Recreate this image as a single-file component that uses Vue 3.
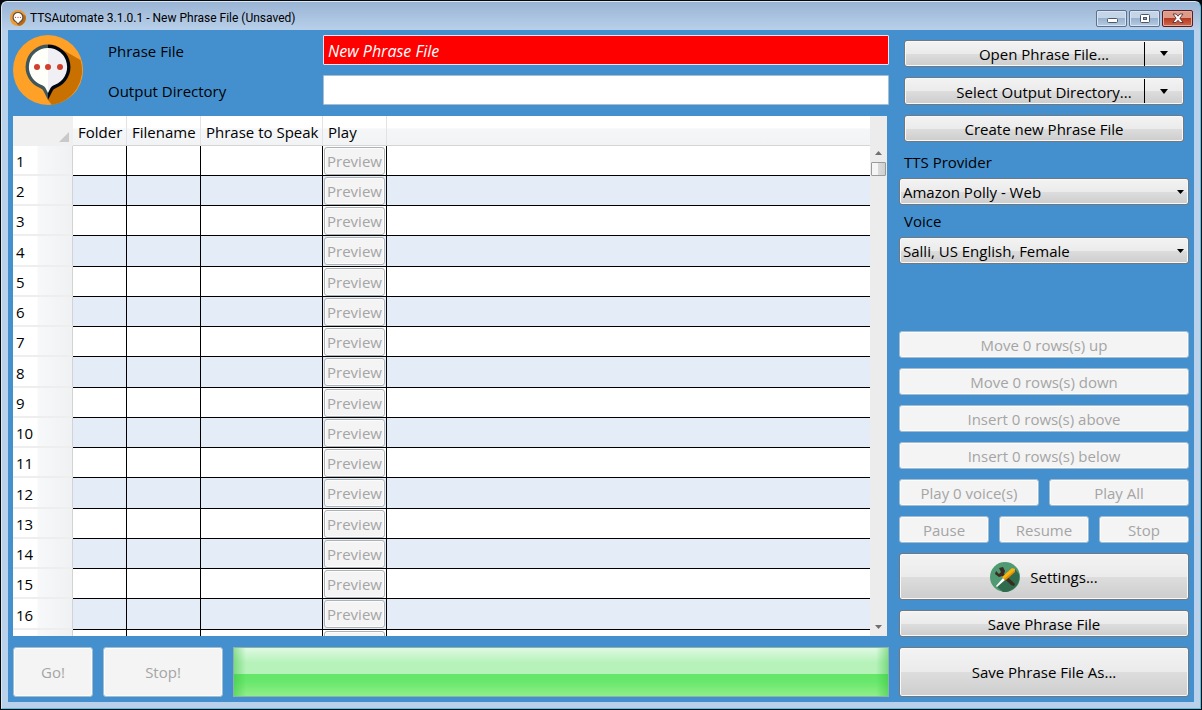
<script setup>
import { ref } from 'vue'

const phraseFile = ref('New Phrase File')
const outputDir = ref('')
const provider = ref('Amazon Polly - Web')
const voice = ref('Salli, US English, Female')
const rows = 17
const rowActions = [
  'Move 0 rows(s) up',
  'Move 0 rows(s) down',
  'Insert 0 rows(s) above',
  'Insert 0 rows(s) below',
]
</script>

<template>
  <div class="desktop">
    <div class="window">
      <header class="titlebar">
        <svg class="app-icon" viewBox="0 0 70 70" aria-hidden="true">
          <circle cx="35" cy="35" r="35" fill="#f09a30" />
          <path d="M52 16 L67.500 25 A35 35 0 0 1 39 70 L35 65Z" fill="#b86a10" />
          <path d="M35 9a23 23 0 0 0-10 44l10 13 10-13a23 23 0 0 0-10-44z" fill="#5a5048" />
          <path d="M35 13a19 19 0 0 0-8 36l8 9 8-9a19 19 0 0 0-8-36z" fill="#fff" />
          <g fill="#d0402c"><circle cx="24" cy="32" r="3" /><circle cx="35" cy="32" r="3" /><circle cx="46" cy="32" r="3" /></g>
        </svg>
        <span class="title">TTSAutomate 3.1.0.1 - New Phrase File (Unsaved)</span>
        <button class="cap" aria-label="Minimize">
          <svg width="12" height="12" viewBox="0 0 12 12"><rect x="1.5" y="6.5" width="10" height="4" rx="1" fill="#fff" stroke="#4c586a" /></svg>
        </button>
        <button class="cap" aria-label="Maximize">
          <svg width="12" height="12" viewBox="0 0 12 12"><rect x="1.5" y="2.5" width="9" height="8" rx="1" fill="#fff" stroke="#4c586a" /><rect x="4.5" y="5.5" width="3" height="2" fill="#8ea9c8" stroke="#4c586a" /></svg>
        </button>
        <button class="cap close" aria-label="Close">
          <svg width="12" height="12" viewBox="0 0 12 12"><path d="M1 2h3.200L6 4.200l1.800-2.200H11L7.900 6.200l3.300 4.300H8L6 8.300 4 10.500H.8l3.300-4.300z" fill="#fff" stroke="#5a3038" stroke-width=".9" /></svg>
        </button>
      </header>

      <main class="client">
        <section class="left">
          <div class="top">
            <svg class="logo" viewBox="0 0 70 70" aria-hidden="true">
              <circle cx="35" cy="35" r="35" fill="#ffa126" />
              <path d="M50 15 L67.500 25 A35 35 0 0 1 39 70 L35 65Z" fill="#c87000" />
              <path d="M35 9.500A22.500 22.500 0 0 0 27 53q3 1 4 4l4 8z" fill="#3f565c" />
              <path d="M35 9.500A22.500 22.500 0 0 1 43 53q-3 1-4 4l-4 8z" fill="#02060e" />
              <path d="M35 13A19 19 0 0 0 28 49.700q4 1.300 5 4.300l2 4z" fill="#fffffa" />
              <path d="M35 13A19 19 0 0 1 42 49.700q-4 1.300-5 4.300l-2 4z" fill="#f0f0f4" />
              <g fill="#d0402c"><circle cx="24" cy="32" r="3" /><circle cx="35" cy="32" r="3" /><circle cx="47" cy="32" r="3" /></g>
            </svg>
            <div class="fields">
              <label for="pf">Phrase File</label>
              <input id="pf" v-model="phraseFile" class="invalid" type="text" />
              <label for="od">Output Directory</label>
              <input id="od" v-model="outputDir" type="text" />
            </div>
          </div>

          <div class="grid">
            <div class="grid-view">
              <table>
                <colgroup>
                  <col class="c-num" /><col class="c-folder" /><col class="c-file" /><col class="c-phrase" /><col class="c-play" /><col />
                </colgroup>
                <thead>
                  <tr>
                    <th class="corner"><svg width="10" height="10" viewBox="0 0 10 10"><path d="M10 0v10H0z" fill="#c9c9c9" /></svg></th>
                    <th>Folder</th><th>Filename</th><th>Phrase to Speak</th><th>Play</th><th></th>
                  </tr>
                </thead>
                <tbody>
                  <tr v-for="n in rows" :key="n">
                    <th scope="row">{{ n }}</th>
                    <td></td><td></td><td></td>
                    <td class="play"><button class="preview" disabled>Preview</button></td>
                    <td></td>
                  </tr>
                </tbody>
              </table>
            </div>
            <div class="scroll">
              <svg width="7" height="4" viewBox="0 0 7 4"><path d="M3.500 0L7 4H0z" fill="#707070" /></svg>
              <div class="thumb"></div>
              <svg class="down" width="7" height="4" viewBox="0 0 7 4"><path d="M3.500 4L7 0H0z" fill="#707070" /></svg>
            </div>
          </div>

          <div class="run">
            <button class="btn go" disabled>Go!</button>
            <button class="btn halt" disabled>Stop!</button>
            <progress value="100" max="100" aria-label="Progress"></progress>
          </div>
        </section>

        <aside class="right">
          <div class="files">
            <div class="split">
              <button class="main">Open Phrase File...</button>
              <button class="drop" aria-label="Recent phrase files"><svg width="8" height="5" viewBox="0 0 8 5"><path d="M0 0h8L4 5z" /></svg></button>
            </div>
            <div class="split">
              <button class="main">Select Output Directory...</button>
              <button class="drop" aria-label="Recent directories"><svg width="8" height="5" viewBox="0 0 8 5"><path d="M0 0h8L4 5z" /></svg></button>
            </div>
            <button class="btn">Create new Phrase File</button>
          </div>
          <label class="lbl" for="prov">TTS Provider</label>
          <div class="combo">
            <select id="prov" v-model="provider"><option>Amazon Polly - Web</option></select>
            <svg width="7" height="4" viewBox="0 0 7 4"><path d="M0 0h7L3.500 4z" /></svg>
          </div>
          <label class="lbl" for="voice">Voice</label>
          <div class="combo">
            <select id="voice" v-model="voice"><option>Salli, US English, Female</option></select>
            <svg width="7" height="4" viewBox="0 0 7 4"><path d="M0 0h7L3.500 4z" /></svg>
          </div>

          <div class="actions">
            <button v-for="a in rowActions" :key="a" class="btn" disabled>{{ a }}</button>
            <div class="pair">
              <button class="btn" disabled>Play 0 voice(s)</button>
              <button class="btn" disabled>Play All</button>
            </div>
            <div class="pair">
              <button class="btn" disabled>Pause</button>
              <button class="btn" disabled>Resume</button>
              <button class="btn" disabled>Stop</button>
            </div>
            <button class="btn settings">
              <svg width="30" height="30" viewBox="0 0 30 30" aria-hidden="true">
                <circle cx="15" cy="15" r="15" fill="#4f9a72" />
                <path d="M7 25L25 7l4 5a15 15 0 0 1-16 18z" fill="#2f6b4c" />
                <path d="M9 6l4-1 2 4-1 3 9 8 2 2-1 2-3-1-9-9-3 1-4-3 1-3 3 3 2-2z" fill="#3b2a20" />
                <path d="M6 24l7-8 2 2-8 7z" fill="#fff" />
                <path d="M12 15L22 6l3 1 0 2-10 9z" fill="#f9b410" />
                <path d="M14 17l11-9v2l-9 8z" fill="#e08d08" />
              </svg>
              Settings...
            </button>
            <button class="btn">Save Phrase File</button>
            <button class="btn tall">Save Phrase File As...</button>
          </div>
        </aside>
      </main>
    </div>
  </div>
</template>

<style>
body {
  margin: 0;
}
</style>

<style scoped>
* {
  box-sizing: border-box;
}
.desktop {
  height: 100vh;
  min-height: 600px;
  padding: 1px;
  background: #05080c;
  font-family: "Open Sans", "Noto Sans", sans-serif;
  font-size: 15px;
  color: #000;
}
button,
input,
select {
  font: inherit;
  color: inherit;
  margin: 0;
}
.window {
  height: 100%;
  display: flex;
  flex-direction: column;
  padding: 0 6px 6px;
  background: linear-gradient(#9ab4d4, #b9d1ea 29px, #b9d1ea);
  border: 1px solid #dbe8f4;
  border-right-color: #45c6e8;
  border-bottom-color: #45c6e8;
  border-radius: 6px 6px 0 0;
}
.titlebar {
  height: 28px;
  flex: none;
  display: flex;
  align-items: center;
  gap: 2px;
  padding: 6px 1px 2px 2px;
  font-family: Roboto, "Open Sans", sans-serif;
  font-size: 12px;
}
.app-icon {
  width: 16px;
  height: 16px;
}
.title {
  flex: 1;
  padding-left: 2px;
}
.cap {
  width: 31px;
  height: 17px;
  padding: 0;
  display: flex;
  align-items: center;
  justify-content: center;
  border: 1px solid #5c708c;
  border-radius: 2px;
  background: linear-gradient(#c4d5e8 45%, #98b2ce 50%, #b4cce4);
  box-shadow: inset 0 0 0 1px #d9e5f2;
}
.close {
  border-color: #591c20;
  background: linear-gradient(#dd9a88 45%, #b63a22 50%, #cf6a4c);
  box-shadow: inset 0 0 0 1px #e4aa9e;
}
.client {
  flex: 1;
  min-height: 0;
  display: flex;
  gap: 10px;
  padding: 5px;
  background: #4490cf;
}
.left {
  flex: 1;
  min-width: 0;
  display: flex;
  flex-direction: column;
}
.top {
  display: flex;
  gap: 25px;
}
.logo {
  width: 70px;
  height: 70px;
}
.fields {
  flex: 1;
  display: grid;
  grid-template-columns: 215px 1fr;
  grid-auto-rows: 30px;
  row-gap: 10px;
  align-items: center;
}
.fields label {
  padding-top: 2px;
}
.fields input {
  width: 100%;
  height: 30px;
  padding: 1px 4px 0;
  border: 1px solid #a9bdd0;
  border-radius: 1px;
  background: #fff;
  outline: 0;
}
.fields .invalid {
  background: #f00;
  border-color: #e4e4ee;
  color: #fff;
  font-size: 16px;
  font-style: italic;
}
.grid {
  flex: 1;
  min-height: 0;
  display: flex;
  margin: 11px 2px 11px 0;
  background: #ececec;
}
.grid-view {
  flex: 1;
  min-width: 0;
  overflow: hidden;
  background: #fff;
}
table {
  width: 100%;
  table-layout: fixed;
  border-collapse: separate;
  border-spacing: 0;
}
.c-num { width: 60px; }
.c-folder { width: 54px; }
.c-file { width: 74px; }
.c-phrase { width: 122px; }
.c-play { width: 64px; }
th,
td {
  padding: 0;
  font-weight: 400;
  text-align: left;
  white-space: nowrap;
}
thead th {
  height: 30px;
  padding: 2px 0 0 5px;
  border-right: 1px solid #e2e3e6;
  border-bottom: 1px solid #d5d5d5;
  background: linear-gradient(#fff 40%, #f5f6f8 45%, #f2f3f5);
}
thead .corner {
  padding: 0 3px 3px 0;
  background: #f0f0f0;
  border-color: #f0f0f0;
  text-align: right;
  vertical-align: bottom;
  line-height: 0;
}
thead th:last-child {
  border-right: 0;
}
tbody tr {
  height: 30px;
}
tbody tr:nth-child(4n) {
  height: 31px;
}
tbody tr:nth-child(even) td {
  background: #e4edf7;
}
tbody th {
  padding-left: 3px;
  padding-top: 2px;
  border-right: 1px solid #d2d3d5;
  border-bottom: 2px solid #eeeeef;
  background: linear-gradient(90deg, #fff 24px, #f7f8f9 25px, #f0f1f3);
  line-height: 20px;
}
td {
  border-right: 1px solid #000;
  border-bottom: 1px solid #000;
}
td:last-child {
  border-right: 0;
}
.play {
  padding: 0 1px;
  vertical-align: middle;
}
.preview {
  display: block;
  width: 100%;
  height: 28px;
  padding: 0;
  border: 1px solid #adb2b5;
  border-radius: 3px;
  background: #f4f4f4;
  box-shadow: inset 0 0 0 1px #fcfcfc;
  color: #a5a5a5;
  line-height: 20px;
}
.scroll {
  width: 17px;
  display: flex;
  flex-direction: column;
  align-items: center;
  padding: 35px 0 7px;
}
.thumb {
  width: 15px;
  height: 14px;
  margin-top: 7px;
  border: 1px solid #9a9a9a;
  border-radius: 1px;
  background: linear-gradient(90deg, #f5f5f5 45%, #dadadc 50%, #cfd0d2);
}
.down {
  margin-top: auto;
}
.run {
  display: flex;
  gap: 10px;
  height: 50px;
}
.go {
  width: 80px;
}
.halt {
  width: 120px;
}
progress {
  flex: 1;
  min-width: 0;
  height: 100%;
  appearance: none;
  border: 1px solid #8db3a6;
  background: #67e768;
}
progress::-webkit-progress-bar {
  background: #67e768;
}
progress::-webkit-progress-value {
  background:
    linear-gradient(90deg, rgba(50, 190, 60, 0.45), transparent 12px, transparent calc(100% - 12px), rgba(50, 190, 60, 0.45)),
    linear-gradient(#e0fae2, #b6f2ba 30%, #b6f2ba 54%, #64e768 55%, #68e76c 70%, #90ee88);
}
.btn,
.split,
.combo select {
  border: 1px solid #707880;
  border-radius: 3px;
  background: linear-gradient(#f3f3f3, #ebebeb 50%, #dddddd 51%, #cdcdcd);
  box-shadow: inset 0 0 0 1px #f8f8f8;
}
.btn {
  height: 27px;
  padding: 0;
  text-align: center;
  line-height: 20px;
  white-space: nowrap;
}
.btn:disabled {
  border-color: #a3bdd0;
  background: #f4f4f4;
  box-shadow: inset 0 0 0 1px #fcfcfc;
  color: #a5a5a5;
}
.run .btn {
  height: 50px;
}
.right {
  width: 290px;
  flex: none;
  display: flex;
  flex-direction: column;
}
.files {
  display: flex;
  flex-direction: column;
  gap: 10px;
  padding: 5px 5px 0;
}
.split {
  height: 28px;
  display: flex;
  align-items: center;
}
.files .split:first-child {
  height: 27px;
}
.split button {
  height: 24px;
  padding: 0;
  border: 0;
  background: none;
  line-height: 20px;
}
.split .main {
  flex: 1;
  padding: 1px 0 0 39px;
  white-space: nowrap;
}
.split .drop {
  width: 39px;
  border-left: 1px solid #000;
  display: flex;
  align-items: center;
  justify-content: center;
}
.lbl {
  height: 32px;
  padding-left: 5px;
  line-height: 32px;
  margin-top: 4px;
}
.combo {
  flex: none;
  position: relative;
}
.combo select {
  display: block;
  width: 100%;
  height: 27px;
  padding: 0 20px 0 3px;
  appearance: none;
}
.combo + .lbl {
  margin-top: 0;
}
.combo svg {
  position: absolute;
  right: 5px;
  top: 12px;
  pointer-events: none;
}
.actions {
  margin-top: auto;
  display: flex;
  flex-direction: column;
  gap: 10px;
}
.pair {
  display: flex;
  gap: 10px;
}
.pair .btn {
  flex: 1 1 0;
  min-width: 0;
}
.settings {
  height: 47px;
  display: flex;
  align-items: center;
  justify-content: center;
  gap: 10px;
}
.tall {
  height: 50px;
}
</style>
